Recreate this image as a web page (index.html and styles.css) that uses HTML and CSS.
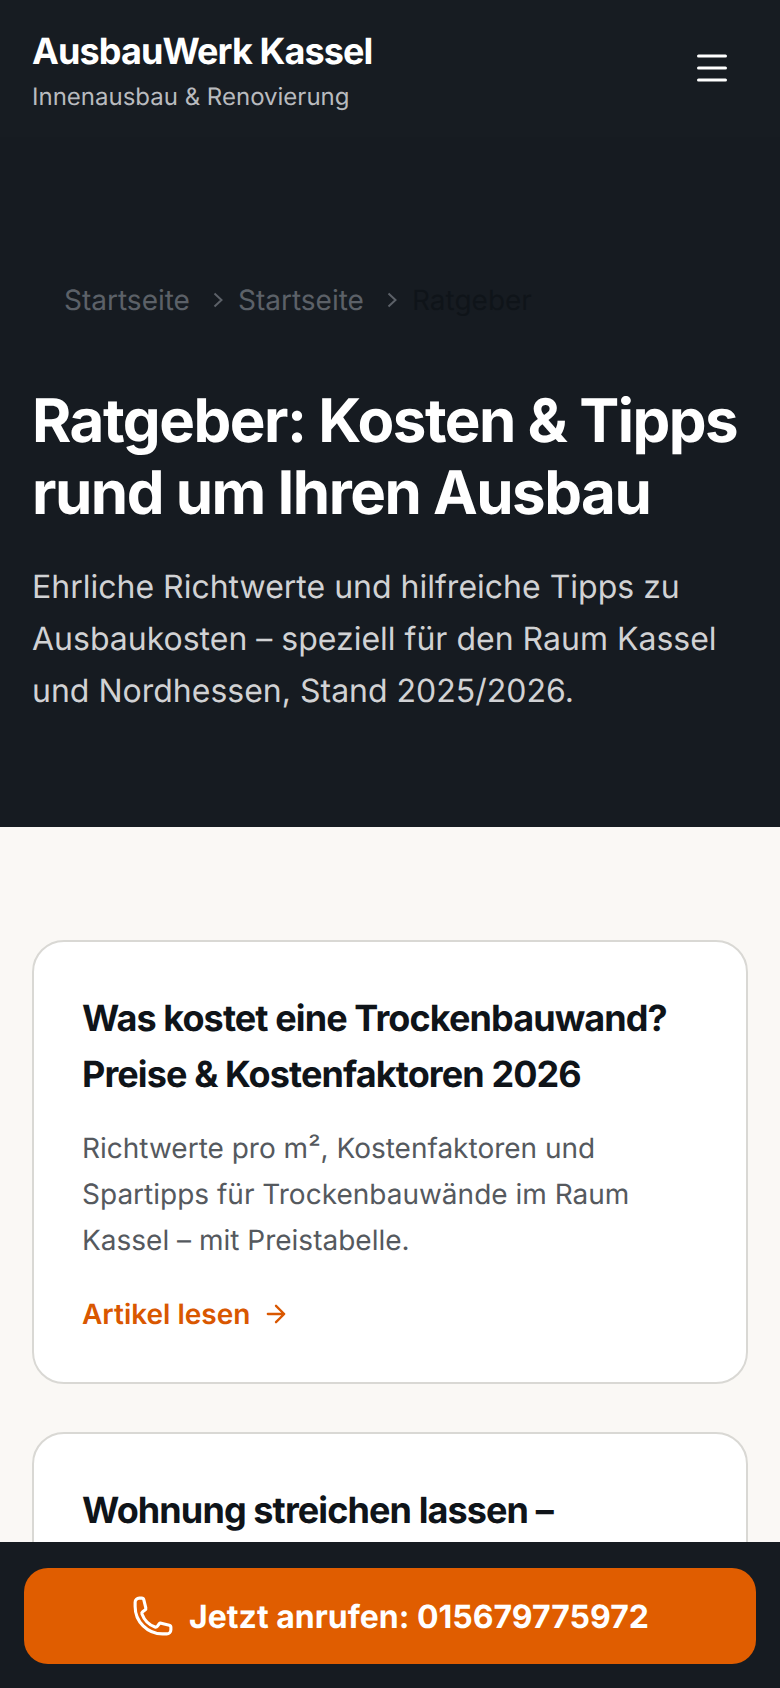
FILE: index.html
```html
<!DOCTYPE html>
<html lang="de">
<head>
<meta charset="utf-8">
<title>Ratgeber – AusbauWerk Kassel</title>
<link rel="stylesheet" href="styles.css">
</head>
<body>
<header class="site-header">
  <a class="brand" href="#">
    <span class="brand-name">AusbauWerk Kassel</span>
    <span class="brand-sub">Innenausbau &amp; Renovierung</span>
  </a>
  <button class="menu-btn" aria-label="Menü">
    <svg class="menu-icon" viewBox="0 0 30 28" aria-hidden="true"><path d="M1.500 2h27M1.500 14h27M1.500 26h27"/></svg>
  </button>
</header>
<section class="hero">
  <nav class="crumbs">
    <a class="crumb" href="#">Startseite</a>
    <svg class="chev" viewBox="0 0 24 24" aria-hidden="true"><path d="m8.500 5.500 7 6.500-7 6.500"/></svg>
    <a class="crumb" href="#">Startseite</a>
    <svg class="chev" viewBox="0 0 24 24" aria-hidden="true"><path d="m8.500 5.500 7 6.500-7 6.500"/></svg>
    <span class="crumb-current">Ratgeber</span>
  </nav>
  <h1 class="hero-title">Ratgeber: Kosten &amp; Tipps rund um Ihren Ausbau</h1>
  <p class="hero-lead">Ehrliche Richtwerte und hilfreiche Tipps zu Ausbaukosten – speziell für den Raum Kassel und Nordhessen, Stand 2025/2026.</p>
</section>
<main class="articles">
  <article class="card">
    <h2 class="card-title">Was kostet eine Trockenbauwand? Preise &amp; Kostenfaktoren 2026</h2>
    <p class="card-text">Richtwerte pro m², Kostenfaktoren und Spartipps für Trockenbauwände im Raum Kassel – mit Preistabelle.</p>
    <a class="card-link" href="#">Artikel lesen
      <svg class="arrow" viewBox="0 0 24 24" aria-hidden="true"><path d="M5 12h14M12 5l7 7-7 7"/></svg>
    </a>
  </article>
  <article class="card">
    <h2 class="card-title">Wohnung streichen lassen –</h2>
  </article>
</main>
<div class="call-bar">
  <a class="call-btn" href="#">
    <svg class="phone" viewBox="0 0 24 24" aria-hidden="true"><path d="M2.250 6.750c0 8.284 6.716 15 15 15h2.250a2.250 2.250 0 0 0 2.250-2.250v-1.372c0-.516-.351-.966-.852-1.091l-4.423-1.106c-.44-.11-.902.055-1.173.417l-.97 1.293c-.282.376-.769.542-1.210.38a12.035 12.035 0 0 1-7.143-7.143c-.162-.441.004-.928.38-1.210l1.293-.97c.363-.271.527-.734.417-1.173L6.963 3.102a1.125 1.125 0 0 0-1.091-.852H4.500A2.250 2.250 0 0 0 2.250 4.500v2.250Z"/></svg>
    <span>Jetzt anrufen: 015679775972</span>
  </a>
</div>
</body>
</html>
```
FILE: styles.css
```css
* { box-sizing: border-box; }
html, body { margin: 0; padding: 0; height: 1688px; overflow: hidden; }
body { background: #faf8f5; font-family: Inter, "Liberation Sans", sans-serif; color: #0f1419; text-rendering: geometricPrecision; }
a { text-decoration: none; color: inherit; }

.site-header { height: 137px; background: #171c22; padding: 29px 32px 0; display: flex; justify-content: space-between; align-items: flex-start; }
.brand { display: flex; flex-direction: column; }
.brand-name { font-size: 36px; line-height: 44px; font-weight: 700; letter-spacing: -.9px; color: #fff; }
.brand-sub { font-size: 24px; line-height: 32px; color: #b9bbbf; margin-top: 8px; }
.menu-btn { background: none; border: 0; padding: 0; margin: 25px 21px 0 0; display: block; }
.menu-icon { display: block; width: 30px; height: 28px; fill: none; stroke: #fff; stroke-width: 3; stroke-linecap: round; }

.hero { height: 690px; background: #161b21; padding: 145px 32px 0; }
.crumbs { display: flex; align-items: center; padding-left: 32px; font-size: 28px; line-height: 36px; }
.crumb { color: #5c6168; }
.crumb-current { color: #0f1419; }
.chev { width: 24px; height: 24px; margin: 0 8px 0 16px; fill: none; stroke: #5c6168; stroke-width: 2; }
.hero-title { margin: 67px 0 0; font-size: 60px; line-height: 72px; font-weight: 700; letter-spacing: -1.500px; color: #fff; }
.hero-lead { margin: 32px 0 0; font-size: 32px; line-height: 52px; color: #d1d2d4; }

.articles { padding: 113px 32px 0; display: flex; flex-direction: column; gap: 48px; }
.card { background: #fff; border: 2px solid #d9d8d4; border-radius: 32px; padding: 48px; }
.card-title { margin: 0; font-size: 36px; line-height: 56px; font-weight: 700; letter-spacing: -.9px; color: #0f1419; }
.card-text { margin: 23px 0 0; font-size: 28px; line-height: 46px; color: #55595e; }
.card-link { display: flex; align-items: center; gap: 12px; margin-top: 31px; font-size: 28px; line-height: 40px; font-weight: 600; color: #d95700; }
.arrow { width: 28px; height: 28px; fill: none; stroke: #d95700; stroke-width: 2; stroke-linecap: round; stroke-linejoin: round; }

.call-bar { position: fixed; left: 0; right: 0; bottom: 0; height: 146px; background: #161b21; padding: 26px 24px 0; }
.call-btn { display: flex; height: 96px; align-items: center; justify-content: center; gap: 14px; background: #e05d00; border-radius: 24px; color: #fff; font-size: 32px; font-weight: 700; }
.phone { width: 44px; height: 44px; fill: none; stroke: #fff; stroke-width: 1.700; stroke-linecap: round; stroke-linejoin: round; }
```
